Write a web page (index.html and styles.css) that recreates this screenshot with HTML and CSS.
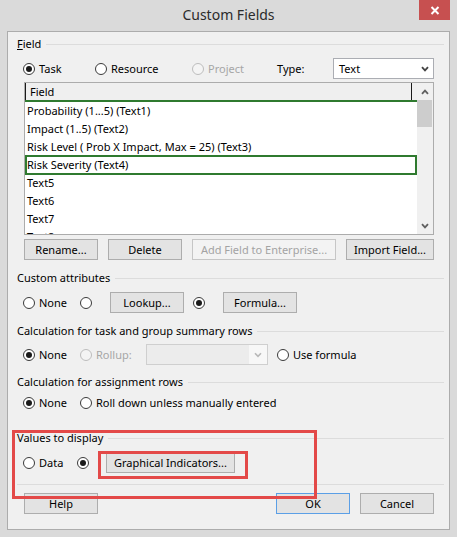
FILE: index.html
```html
<!DOCTYPE html>
<html>
<head>
<meta charset="utf-8">
<title>Custom Fields</title>
<link rel="stylesheet" href="styles.css">
</head>
<body>
<div class="window">
  <div class="titlebar">
    <div class="title">Custom Fields</div>
    <div class="close"><svg width="10" height="9" viewBox="0 0 10 9"><path d="M1.5 1 L8.5 8 M8.5 1 L1.5 8" stroke="#fff" stroke-width="2" fill="none"/></svg></div>
  </div>
  <div class="client">
    <div class="legend legend-field"><span><u>F</u>ield</span><span class="legend-line"></span></div>
    <div class="row row-field">
      <div class="opt opt-task"><span class="rb on"></span>Task</div>
      <div class="opt opt-resource"><span class="rb"></span>Resource</div>
      <div class="opt opt-project disabled"><span class="rb"></span>Project</div>
      <span class="type-label">Type:</span>
      <div class="select"><span>Text</span><svg class="chev" width="8" height="6" viewBox="0 0 8 6"><polyline points="1,1.2 4,4.4 7,1.2" stroke="#444" stroke-width="1.8" fill="none"/></svg></div>
    </div>
    <div class="list">
      <div class="list-body">
        <div class="list-head"><span class="head-cell">Field</span></div>
        <div class="list-row">Probability (1...5) (Text1)</div>
        <div class="list-row">Impact (1..5) (Text2)</div>
        <div class="list-row">Risk Level ( Prob X Impact, Max = 25) (Text3)</div>
        <div class="list-row selected">Risk Severity (Text4)</div>
        <div class="list-row">Text5</div>
        <div class="list-row">Text6</div>
        <div class="list-row">Text7</div>
        <div class="list-row">Text8</div>
      </div>
      <div class="scrollbar">
        <div class="sb-btn"><svg width="8" height="6" viewBox="0 0 8 6"><polyline points="1,4.8 4,1.6 7,4.8" stroke="#606060" stroke-width="1.8" fill="none"/></svg></div>
        <div class="sb-thumb"></div>
        <div class="sb-track"></div>
        <div class="sb-btn"><svg width="8" height="6" viewBox="0 0 8 6"><polyline points="1,1.2 4,4.4 7,1.2" stroke="#606060" stroke-width="1.8" fill="none"/></svg></div>
      </div>
    </div>
    <div class="btn-row field-actions">
      <div class="btn w74">Rename...</div>
      <div class="btn w74">Delete</div>
      <div class="btn w144 disabled">Add Field to Enterprise...</div>
      <div class="btn w88">Import Field...</div>
    </div>

    <div class="legend legend-attr"><span>Custom attributes</span><span class="legend-line"></span></div>
    <div class="row row-attr">
      <div class="opt opt-none"><span class="rb"></span>None</div>
      <div class="opt opt-solo"><span class="rb"></span></div>
      <div class="btn w74">Lookup...</div>
      <div class="opt opt-solo opt-formula"><span class="rb on"></span></div>
      <div class="btn w74">Formula...</div>
    </div>

    <div class="legend legend-calc"><span>Calculation for task and group summary rows</span><span class="legend-line"></span></div>
    <div class="row row-calc">
      <div class="opt opt-none"><span class="rb on"></span>None</div>
      <div class="opt opt-rollup disabled"><span class="rb"></span>Rollup:</div>
      <div class="combo"><span class="combo-field"></span><span class="combo-btn"><svg width="8" height="6" viewBox="0 0 8 6"><polyline points="1,1.2 4,4.4 7,1.2" stroke="#b8b8b8" stroke-width="1.6" fill="none"/></svg></span></div>
      <div class="opt opt-useformula"><span class="rb"></span>Use formula</div>
    </div>

    <div class="legend legend-assign"><span>Calculation for assignment rows</span><span class="legend-line"></span></div>
    <div class="row row-assign">
      <div class="opt opt-none"><span class="rb on"></span>None</div>
      <div class="opt"><span class="rb"></span>Roll down unless manually entered</div>
    </div>

    <div class="legend legend-values"><span>Values to display</span><span class="legend-line"></span></div>
    <div class="row row-values">
      <div class="opt opt-data"><span class="rb"></span>Data</div>
      <div class="opt opt-graph"><span class="rb on"></span></div>
      <div class="btn w129">Graphical Indicators...</div>
    </div>

    <div class="separator"></div>

    <div class="btn-row dialog-actions">
      <div class="btn w74">Help</div>
      <div class="btn w74 default push">OK</div>
      <div class="btn w74">Cancel</div>
    </div>
  </div>
  <div class="annot annot-outer"></div>
  <div class="annot annot-inner"></div>
</div>
</body>
</html>
```

FILE: styles.css
```css
* { box-sizing: border-box; }
html, body { margin: 0; padding: 0; }
body {
  font-family: "Noto Sans", "Open Sans", sans-serif;
  font-size: 11px;
  color: #000;
  background: #dadada;
}
.window {
  position: relative;
  width: 457px;
  height: 537px;
  background: #dadada;
  display: flex;
  flex-direction: column;
}
.titlebar {
  height: 31px;
  flex: none;
  display: grid;
  grid-template-columns: 1fr auto 1fr;
  align-items: start;
}
.title {
  grid-column: 2;
  font-size: 14px;
  line-height: 30px;
  color: #2b2b2b;
}
.close {
  grid-column: 3;
  justify-self: end;
  margin-right: 7px;
  width: 31px;
  height: 20px;
  background: #c75050;
  display: flex;
  align-items: center;
  justify-content: center;
}
.client {
  flex: 1;
  margin: 0 7px 7px 7px;
  border: 1px solid #acacac;
  background: #f0f0f0;
  padding: 4px 5px 0 9px;
  display: flex;
  flex-direction: column;
}
.legend {
  display: flex;
  align-items: center;
  height: 16px;
  line-height: 16px;
  white-space: nowrap;
  flex: none;
}
.legend-line {
  flex: 1;
  height: 1px;
  background: #dcdcdc;
  margin-left: 5px;
}
.row {
  display: flex;
  align-items: center;
  height: 21px;
  padding-left: 6px;
  white-space: nowrap;
  flex: none;
}
.opt {
  display: flex;
  align-items: center;
  gap: 4px;
  flex: none;
}
.opt.disabled { color: #a6a6a6; }
.rb {
  width: 12px;
  height: 12px;
  border-radius: 50%;
  border: 1px solid #3a3a3a;
  background: #fff;
  flex: none;
  display: flex;
  align-items: center;
  justify-content: center;
}
.rb.on::after {
  content: "";
  width: 6px;
  height: 6px;
  border-radius: 50%;
  background: #1a1a1a;
}
.disabled .rb {
  border-color: #bdbdbd;
  background: #f4f4f4;
}

/* field section */
.row-field { margin-top: 6px; }
.opt-task { width: 72px; }
.opt-resource { width: 97px; }
.opt-project { width: 85px; }
.type-label { width: 56px; flex: none; }
.select {
  width: 101px;
  height: 21px;
  border: 1px solid #abadb3;
  background: #fff;
  display: flex;
  align-items: center;
  justify-content: space-between;
  padding: 0 4px 0 5px;
  flex: none;
}
.list {
  margin-top: 3px;
  margin-left: 7px;
  width: 410px;
  height: 153px;
  border: 1px solid #acacac;
  background: #fff;
  display: grid;
  grid-template-columns: 1fr 16px;
  overflow: hidden;
  flex: none;
}
.list-body {
  overflow: hidden;
  display: flex;
  flex-direction: column;
}
.list-head {
  height: 19px;
  flex: none;
  background: #efefef;
  border-bottom: 2px solid #2f7a2f;
  display: flex;
}
.head-cell {
  width: 387px;
  border-left: 1px solid #1a1a1a;
  border-right: 1px solid #1a1a1a;
  padding-left: 4px;
  line-height: 17px;
}
.list-row {
  height: 18px;
  line-height: 18px;
  padding-left: 2px;
  flex: none;
  white-space: nowrap;
}
.list-row.selected {
  height: 20px;
  line-height: 20px;
  margin: -1px 0;
  box-shadow: inset 0 0 0 2px #2f7a2f;
}
.scrollbar {
  background: #f0f0f0;
  display: flex;
  flex-direction: column;
}
.sb-btn {
  height: 17px;
  flex: none;
  display: flex;
  align-items: center;
  justify-content: center;
}
.sb-thumb {
  height: 27px;
  width: 15px;
  flex: none;
  background: #cdcdcd;
}
.sb-track { flex: 1; }

.btn-row {
  display: flex;
  gap: 10px;
  margin-left: 7px;
  margin-right: 10px;
  flex: none;
}
.field-actions { margin-top: 4px; }
.btn {
  flex: none;
  height: 21px;
  border: 1px solid #adadad;
  background: #e3e3e3;
  display: flex;
  align-items: center;
  justify-content: center;
  white-space: nowrap;
}
.btn.disabled {
  border-color: #c6c6c6;
  background: #f3f3f3;
  color: #a3a3a3;
}
.btn.default { border-color: #5b9fe6; }
.btn.push { margin-left: auto; }
.w74 { width: 74px; }
.w88 { width: 88px; }
.w129 { width: 129px; }
.w144 { width: 144px; }

/* custom attributes */
.legend-attr { margin-top: 10px; }
.row-attr { margin-top: 6px; }
.opt-none { width: 57px; }
.opt-solo { width: 30px; }
.opt-formula { margin-left: 9px; }

/* calculation rows */
.legend-calc { margin-top: 10px; }
.row-calc { margin-top: 5px; }
.opt-rollup { width: 66px; }
.combo {
  width: 122px;
  height: 21px;
  border: 1px solid #cfcfcf;
  display: flex;
  flex: none;
}
.combo-field { flex: 1; background: #ececec; }
.combo-btn {
  width: 18px;
  background: #f7f7f7;
  display: flex;
  align-items: center;
  justify-content: center;
}
.opt-useformula { margin-left: 9px; }

.legend-assign { margin-top: 9px; }
.row-assign { margin-top: 2px; }

/* values */
.legend-values { margin-top: 17px; }
.row-values { margin-top: 6px; }
.opt-data { width: 54px; }
.opt-graph { width: 29px; }

.separator {
  height: 1px;
  background: #dcdcdc;
  margin-top: 11px;
  flex: none;
}
.dialog-actions { margin-top: 8px; }

/* annotation boxes drawn over the dialog */
.annot {
  position: absolute;
  border: 3px solid #e34948;
}
.annot-outer { left: 12px; top: 430px; width: 305px; height: 69px; }
.annot-inner { left: 98px; top: 451px; width: 150px; height: 28px; }
```
